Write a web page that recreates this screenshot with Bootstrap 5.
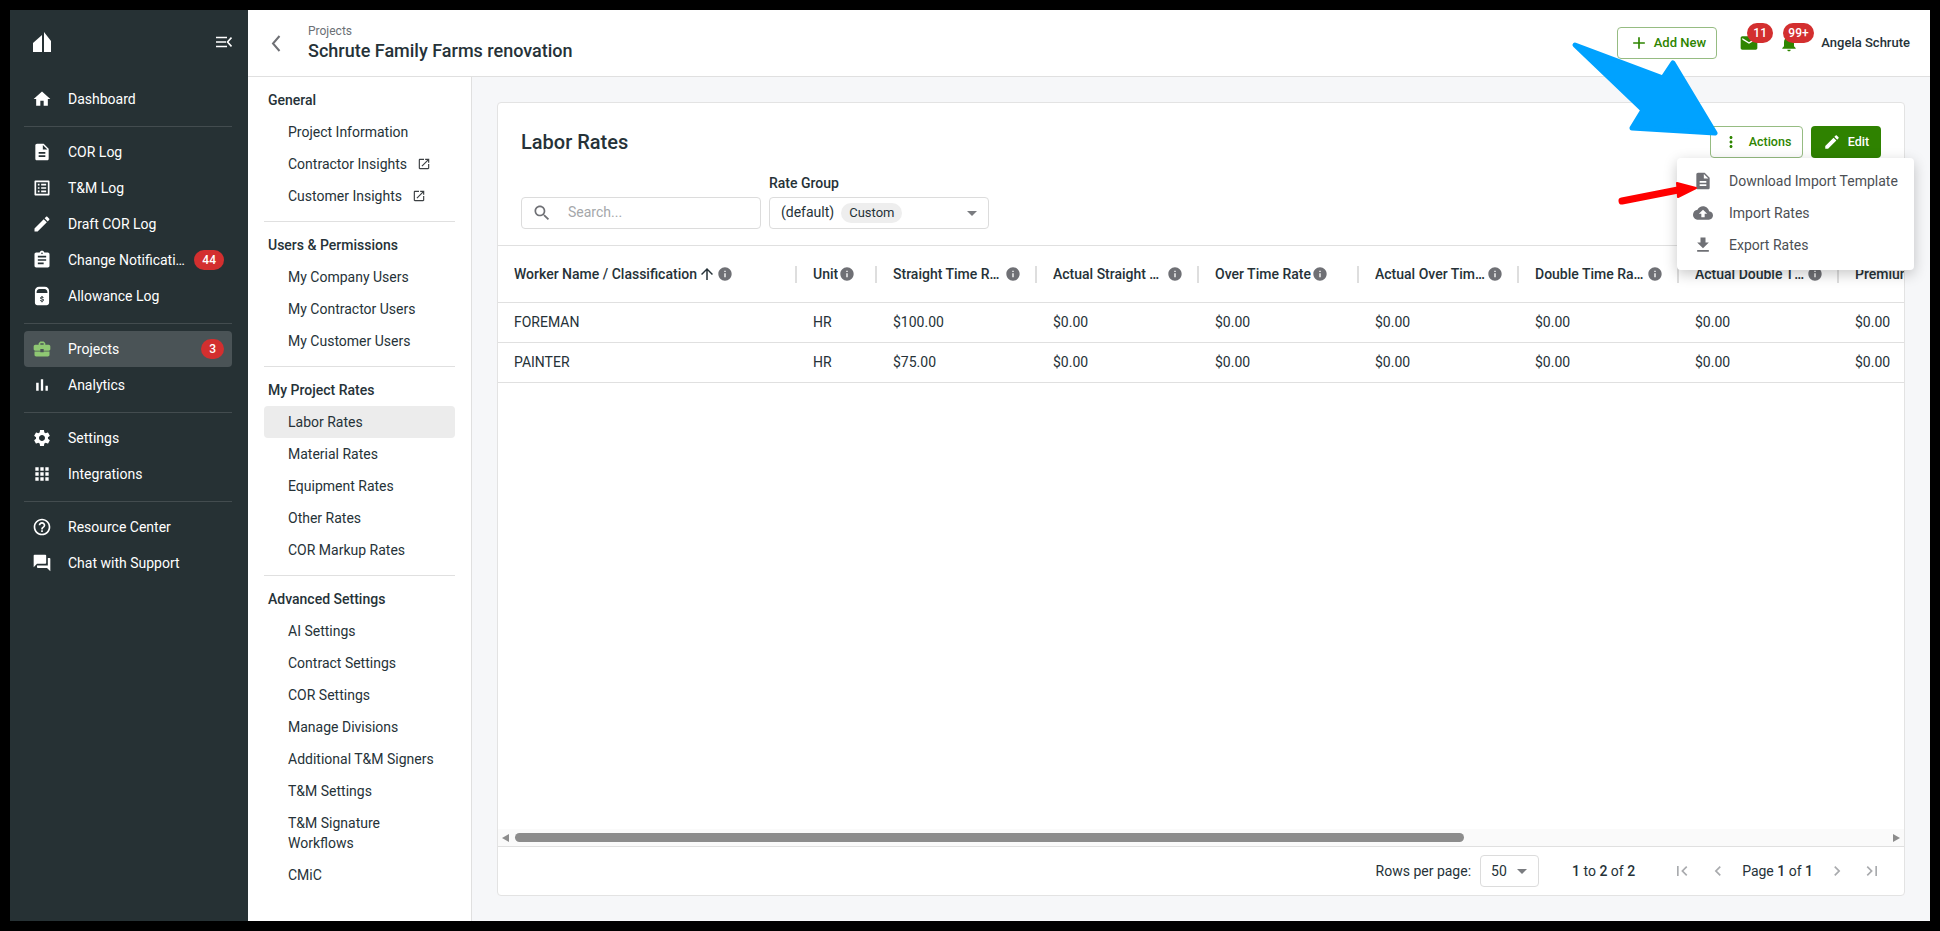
<!DOCTYPE html>
<html lang="en">
<head>
  <meta charset="UTF-8">
  <meta name="viewport" content="width=device-width, initial-scale=1.0">
  <title>Labor Rates - Schrute Family Farms renovation</title>
  <link rel="stylesheet" href="https://cdn.jsdelivr.net/npm/bootstrap@5.3.3/dist/css/bootstrap.min.css">
  <style>
    html, body { height: 100%; }
    body {
      background: #000;
      padding: 10px;
      overflow: hidden;
      font-family: Roboto, "Liberation Sans", sans-serif;
      font-size: 14px;
      color: #263238;
    }
    .ico { width: 20px; height: 20px; fill: currentColor; flex: none; display: block; }
    .ico-18 { width: 18px; height: 18px; }
    .ico-info { width: 16px; height: 16px; fill: #6f7075; margin-left: 1px; }
    .ico-sort { width: 18px; height: 18px; margin-left: 1px; }
    .min-w-zero { min-width: 0; }

    .app-shell { height: 911px; background: #fff; }

    /* left dark rail */
    .rail { width: 238px; flex: none; background: #263134; padding: 0 14px; color: #fff; }
    .rail-head { height: 66px; margin: 0 0 5px; padding: 0 0 2px 9px; width: 208px; }
    .rail-nav { width: 208px; }
    .rail-link {
      height: 36px; padding: 0 8px; border-radius: 4px; color: #fff;
      gap: 16px; line-height: 36px; white-space: nowrap;
    }
    .rail-link:hover, .rail-link:focus { color: #fff; }
    .rail-link.is-current { background: #4a5356; }
    .rail-link.is-current .ico { color: #8fc873; }
    .rail-sep { margin: 9px 0 7px; border: 0; border-top: 1px solid #434c4f; opacity: 1; }
    .count-pill {
      background: #d32f2f; color: #fff; font-size: 12px; font-weight: 500; height: 20px;
      line-height: 20px; padding: 0 8px; border-radius: 10px; border: 0;
    }
    .rail-label { overflow: hidden; text-overflow: ellipsis; flex: 0 1 auto; min-width: 0; }
    .pill-tight { flex: none; margin-left: -8px; }

    /* top bar */
    .topbar { height: 67px; flex: none; border-bottom: 1px solid #e0e0e0; padding: 0 20px 0 16px; }
    .crumb-top { font-size: 12px; color: #6b7075; line-height: 14px; }
    .crumb-title { font-size: 18px; font-weight: 500; line-height: 22px; margin-top: 2px; }
    .back-ico { width: 24px; height: 24px; fill: none; stroke: #6f7075; stroke-width: 2; }
    .btn-line {
      height: 32px; padding: 0; border: 1px solid #96bc82; border-radius: 4px; color: #2e8500;
      background: #fff; font-size: 13px; font-weight: 500;
    }
    .btn-line:hover { background: #fff; color: #2e8500; border-color: #96bc82; }
    .btn-add { width: 100px; gap: 5px; }
    .btn-actions { width: 93px; gap: 9px; font-size: 12.5px; }
    .btn-fill {
      width: 70px; height: 32px; padding: 0; border: 0; border-radius: 4px; color: #fff;
      background: #2f8200; font-size: 12.5px; font-weight: 500; gap: 7px;
    }
    .btn-fill:hover { background: #2f8200; color: #fff; }
    .alert-ico { color: #2e8500; width: 20px; height: 20px; position: relative; }
    .alert-mail { margin-left: 22px; }
    .alert-bell { margin-left: 20px; }
    .alert-num { position: absolute; top: -10px; left: 8px; height: 20px; padding: 0 6px; line-height: 20px; }
    .alert-num.wide { left: 4px; padding: 0 5px; }
    .user-name { font-size: 13px; font-weight: 500; white-space: nowrap; margin-left: 22px; }

    /* second column of links */
    .subnav { width: 224px; flex: none; border-right: 1px solid #e0e0e0; padding: 7px 16px 0; }
    .sub-head { font-weight: 500; line-height: 32px; height: 32px; padding-left: 4px; }
    .sub-link { padding: 6px 0 6px 24px; line-height: 20px; color: #263238; border-radius: 4px; }
    .sub-link:hover, .sub-link:focus { color: #263238; }
    .sub-link.is-current { background: #ececec; }
    .sub-link .ico { width: 14px; height: 14px; margin-left: 10px; color: #3c4043; }
    .sub-sep { margin: 9px 0 7px; border: 0; border-top: 1px solid #e0e0e0; opacity: 1; }

    /* content */
    .work-area { background: #f6f7f9; padding: 25px; min-width: 0; }
    .rate-card { border: 1px solid #e3e3e3; border-radius: 4px; background: #fff; height: 794px; min-width: 0; }
    .rate-head { padding: 23px 23px 16px 23px; }
    .rate-title { font-size: 20px; font-weight: 500; margin: 0; }
    .title-row { height: 32px; margin-bottom: 17px; }
    .field-label { font-weight: 500; line-height: 16px; margin-bottom: 6px; }
    .field-box {
      height: 32px; border: 1px solid #dcdcdc; border-radius: 4px; background: #fff;
    }
    .field-search { width: 240px; padding: 0 10px; gap: 16px; color: #6f7075; }
    .field-search input { border: 0; outline: 0; padding: 0 0 2px; font-size: 14px; width: 100%; min-width: 0; box-shadow: none; height: 28px; }
    .field-search input::placeholder { color: #a5a7aa; }
    .field-select { width: 220px; padding: 0 4px 0 11px; }
    .field-value { margin-bottom: 2px; }
    .chip-custom {
      background: #eeeeee; color: #263238; font-size: 13px; font-weight: 400;
      padding: 0 8px; height: 20px; line-height: 20px; border-radius: 10px; margin-left: 7px;
    }
    .caret-ico { color: #7a7c80; width: 24px; height: 24px; margin-left: auto; }

    .table-clip { overflow: hidden; min-height: 0; }
    .rates-table { table-layout: fixed; width: 1501px; margin: 0; border-top: 1px solid #e0e0e0; font-size: 14px; }
    .rates-table > thead > tr > th {
      height: 57px; padding: 0 16px; font-weight: 500; vertical-align: middle; position: relative;
      border-bottom: 1px solid #e0e0e0; color: #263238;
    }
    .rates-table > thead > tr > th::after {
      content: ""; position: absolute; right: 0; top: 20px; width: 2px; height: 17px; background: #dedede;
    }
    .rates-table > tbody > tr > td {
      height: 40px; padding: 0 16px; vertical-align: middle; border-bottom: 1px solid #e0e0e0; color: #263238;
    }
    .head-text { overflow: hidden; text-overflow: ellipsis; white-space: nowrap; min-width: 0; }
    .w-name { width: 299px; }
    .w-unit { width: 80px; }
    .w-rate { width: 160px; }
    .w-rate-wide { width: 162px; }

    .fake-scroll { height: 17px; flex: none; background: #fafafa; padding: 0 4px; }
    .scroll-arrow { width: 0; height: 0; border-top: 4.5px solid transparent; border-bottom: 4.5px solid transparent; flex: none; }
    .scroll-arrow.to-left { border-right: 7px solid #8c8c8c; }
    .scroll-arrow.to-right { border-left: 7px solid #8c8c8c; margin-left: auto; }
    .scroll-thumb { width: 949px; height: 9px; background: #8c8c8c; border-radius: 5px; margin-left: 6px; }

    .rate-foot { height: 49px; flex: none; border-top: 1px solid #e0e0e0; padding-right: 22px; white-space: nowrap; }
    .foot-select { width: 59px; margin-left: 9px; padding-left: 10px; }
    .foot-range { margin-left: 33px; }
    .pager-ico { color: #a9abae; }
    .pager-first { margin-right: 2px; }
    .pager-last { margin-left: 1px; }
    .foot-pager { margin-left: 37px; gap: 14px; }

    /* open actions menu */
    .actions-menu {
      display: block; position: absolute; top: 32px; left: -33px; width: 237px; padding: 7px 0 9px; margin: 0;
      border: 0; border-radius: 4px; box-shadow: 0 4px 14px rgba(0,0,0,.22); z-index: 5;
    }
    .actions-menu .dropdown-item {
      height: 32px; padding: 0 0 0 16px; gap: 16px; font-size: 14px; color: #4c4f54;
    }
    .actions-menu .ico { color: #6f7075; }

    .callouts { position: fixed; left: 0; top: 0; width: 1940px; height: 931px; pointer-events: none; z-index: 10; }
  </style>
</head>
<body>

<svg width="0" height="0" class="d-none">
  <symbol id="i-home" viewBox="0 0 24 24"><path d="M10 20v-6h4v6h5v-8h3L12 3 2 12h3v8z"/></symbol>
  <symbol id="i-doc" viewBox="0 0 24 24"><path d="M14 2H6c-1.1 0-1.99.9-1.99 2L4 20c0 1.1.89 2 1.99 2H18c1.1 0 2-.9 2-2V8l-6-6zm2 16H8v-2h8v2zm0-4H8v-2h8v2zm-3-5V3.5L18.5 9H13z"/></symbol>
  <symbol id="i-list" viewBox="0 0 24 24"><path d="M19 5v14H5V5h14m1.1-2H3.9c-.5 0-.9.4-.9.9v16.2c0 .4.4.9.9.9h16.2c.4 0 .9-.5.9-.9V3.9c0-.5-.5-.9-.9-.9zM11 7h6v2h-6V7zm0 4h6v2h-6v-2zm0 4h6v2h-6zM7 7h2v2H7zm0 4h2v2H7zm0 4h2v2H7z"/></symbol>
  <symbol id="i-edit" viewBox="0 0 24 24"><path d="M3 17.25V21h3.75L17.81 9.94l-3.75-3.75L3 17.25zM20.71 7.04c.39-.39.39-1.02 0-1.41l-2.34-2.34c-.39-.39-1.02-.39-1.41 0l-1.83 1.83 3.75 3.75 1.83-1.83z"/></symbol>
  <symbol id="i-clip" viewBox="0 0 24 24"><path d="M19 3h-4.18C14.4 1.84 13.3 1 12 1c-1.3 0-2.4.84-2.82 2H5c-1.1 0-2 .9-2 2v14c0 1.1.9 2 2 2h14c1.1 0 2-.9 2-2V5c0-1.1-.9-2-2-2zm-7 0c.55 0 1 .45 1 1s-.45 1-1 1-1-.45-1-1 .45-1 1-1zm2 14H7v-2h7v2zm3-4H7v-2h10v2zm0-4H7V7h10v2z"/></symbol>
  <symbol id="i-jar" viewBox="0 0 24 24"><path fill-rule="evenodd" d="M8.500 1h7c3 0 5 2 5 5v14c0 1.700-1.300 3-3 3h-11c-1.700 0-3-1.300-3-3V6c0-3 2-5 5-5zM5.500 7.500v1h13v-1c0-2-1.400-4-3.500-4H9c-2.100 0-3.500 2-3.500 4zM11.300 12v.9c-.9.2-1.500.8-1.500 1.600 0 1 .8 1.400 2.200 1.800.8.200 1 .4 1 .7s-.3.6-.9.6-.9-.3-1-.7H9.700c.1.900.7 1.400 1.600 1.600v.9h1.400v-.9c.9-.2 1.600-.8 1.600-1.600 0-1.100-.9-1.500-2.300-1.900-.8-.2-1-.4-1-.6s.3-.5.9-.5c.5 0 .8.300.9.600h1.300c-.1-.8-.6-1.300-1.400-1.500V12z"/></symbol>
  <symbol id="i-case" viewBox="0 0 24 24"><path d="M10 16v-1H3.010L3 19c0 1.110.89 2 2 2h14c1.110 0 2-.89 2-2v-4h-7v1h-4zm10-9h-4.010V5l-2-2h-4l-2 2v2H4c-1.100 0-2 .9-2 2v3c0 1.110.89 2 2 2h6v-2h4v2h6c1.100 0 2-.9 2-2V9c0-1.100-.9-2-2-2zm-6 0h-4V5h4v2z"/></symbol>
  <symbol id="i-bars" viewBox="0 0 24 24"><path d="M5 9.200h3V19H5zM10.600 5h2.800v14h-2.800zm5.600 8H19v6h-2.800z"/></symbol>
  <symbol id="i-gear" viewBox="0 0 24 24"><path d="M19.140 12.940c.04-.3.06-.61.06-.94 0-.32-.02-.64-.07-.94l2.030-1.580c.18-.14.23-.41.12-.61l-1.920-3.320c-.12-.22-.37-.29-.59-.22l-2.390.96c-.5-.38-1.030-.7-1.620-.94l-.36-2.540c-.04-.24-.24-.41-.48-.41h-3.840c-.24 0-.43.17-.47.41l-.36 2.540c-.59.24-1.130.57-1.620.94l-2.390-.96c-.22-.08-.47 0-.59.22L2.740 8.870c-.12.21-.08.47.12.61l2.030 1.580c-.05.3-.09.63-.09.94s.02.64.07.94l-2.030 1.580c-.18.14-.23.41-.12.61l1.920 3.320c.12.22.37.29.59.22l2.390-.96c.5.38 1.030.7 1.620.94l.36 2.540c.05.24.24.41.48.41h3.840c.24 0 .44-.17.47-.41l.36-2.540c.59-.24 1.130-.56 1.620-.94l2.390.96c.22.08.47 0 .59-.22l1.920-3.320c.12-.22.07-.47-.12-.61l-2.010-1.580zM12 15.600c-1.980 0-3.600-1.620-3.600-3.600s1.620-3.600 3.600-3.600 3.600 1.620 3.600 3.600-1.620 3.600-3.600 3.600z"/></symbol>
  <symbol id="i-apps" viewBox="0 0 24 24"><path d="M4 8h4V4H4v4zm6 12h4v-4h-4v4zm-6 0h4v-4H4v4zm0-6h4v-4H4v4zm6 0h4v-4h-4v4zm6-10v4h4V4h-4zm-6 4h4V4h-4v4zm6 6h4v-4h-4v4zm0 6h4v-4h-4v4z"/></symbol>
  <symbol id="i-help" viewBox="0 0 24 24"><path d="M11 18h2v-2h-2v2zm1-16C6.480 2 2 6.480 2 12s4.480 10 10 10 10-4.480 10-10S17.520 2 12 2zm0 18c-4.410 0-8-3.590-8-8s3.590-8 8-8 8 3.590 8 8-3.590 8-8 8zm0-14c-2.210 0-4 1.790-4 4h2c0-1.100.9-2 2-2s2 .9 2 2c0 2-3 1.750-3 5h2c0-2.250 3-2.500 3-5 0-2.210-1.790-4-4-4z"/></symbol>
  <symbol id="i-forum" viewBox="0 0 24 24"><path d="M21 6h-2v9H6v2c0 .55.45 1 1 1h11l4 4V7c0-.55-.45-1-1-1zm-4 6V3c0-.55-.45-1-1-1H3c-.55 0-1 .45-1 1v14l4-4h10c.55 0 1-.45 1-1z"/></symbol>
  <symbol id="i-open" viewBox="0 0 24 24"><path d="M19 19H5V5h7V3H5c-1.110 0-2 .9-2 2v14c0 1.100.89 2 2 2h14c1.100 0 2-.9 2-2v-7h-2v7zM14 3v2h3.590l-9.830 9.830 1.410 1.410L19 6.410V10h2V3h-7z"/></symbol>
  <symbol id="i-search" viewBox="0 0 24 24"><path d="M15.500 14h-.79l-.28-.27C15.410 12.590 16 11.110 16 9.500 16 5.910 13.090 3 9.500 3S3 5.910 3 9.500 5.910 16 9.500 16c1.610 0 3.090-.59 4.230-1.570l.27.28v.79l5 4.990L20.490 19l-4.990-5zm-6 0C7.010 14 5 11.990 5 9.500S7.010 5 9.500 5 14 7.010 14 9.500 11.990 14 9.500 14z"/></symbol>
  <symbol id="i-info" viewBox="0 0 24 24"><path d="M12 2C6.480 2 2 6.480 2 12s4.480 10 10 10 10-4.480 10-10S17.520 2 12 2zm1 15h-2v-6h2v6zm0-8h-2V7h2v2z"/></symbol>
  <symbol id="i-up" viewBox="0 0 24 24"><path d="M4 12l1.410 1.410L11 7.830V20h2V7.830l5.580 5.590L20 12l-8-8-8 8z"/></symbol>
  <symbol id="i-more" viewBox="0 0 24 24"><path d="M12 8c1.100 0 2-.9 2-2s-.9-2-2-2-2 .9-2 2 .9 2 2 2zm0 2c-1.100 0-2 .9-2 2s.9 2 2 2 2-.9 2-2-.9-2-2-2zm0 6c-1.100 0-2 .9-2 2s.9 2 2 2 2-.9 2-2-.9-2-2-2z"/></symbol>
  <symbol id="i-cloud" viewBox="0 0 24 24"><path d="M19.350 10.040C18.670 6.590 15.640 4 12 4 9.110 4 6.600 5.640 5.350 8.040 2.340 8.360 0 10.910 0 14c0 3.310 2.690 6 6 6h13c2.760 0 5-2.240 5-5 0-2.640-2.050-4.780-4.650-4.960zM14 13v4h-4v-4H7l5-5 5 5h-3z"/></symbol>
  <symbol id="i-down" viewBox="0 0 24 24"><path d="M19 9h-4V3H9v6H5l7 7 7-7zM5 18v2h14v-2H5z"/></symbol>
  <symbol id="i-mail" viewBox="0 0 24 24"><path d="M20 4H4c-1.100 0-1.990.9-1.990 2L2 18c0 1.100.9 2 2 2h16c1.100 0 2-.9 2-2V6c0-1.100-.9-2-2-2zm0 4l-8 5-8-5V6l8 5 8-5v2z"/></symbol>
  <symbol id="i-bell" viewBox="0 0 24 24"><path d="M12 22c1.100 0 2-.9 2-2h-4c0 1.100.89 2 2 2zm6-6v-5c0-3.070-1.640-5.640-4.500-6.320V4c0-.83-.67-1.500-1.500-1.500s-1.500.67-1.500 1.500v.68C7.630 5.360 6 7.920 6 11v5l-2 2v1h16v-1l-2-2z"/></symbol>
  <symbol id="i-first" viewBox="0 0 24 24"><path d="M18.410 16.590L13.820 12l4.590-4.590L17 6l-6 6 6 6zM6 6h2v12H6z"/></symbol>
  <symbol id="i-last" viewBox="0 0 24 24"><path d="M5.590 7.410L10.180 12l-4.590 4.590L7 18l6-6-6-6zM16 6h2v12h-2z"/></symbol>
  <symbol id="i-prev" viewBox="0 0 24 24"><path d="M15.410 7.410L14 6l-6 6 6 6 1.410-1.410L10.830 12z"/></symbol>
  <symbol id="i-next" viewBox="0 0 24 24"><path d="M10 6L8.590 7.410 13.170 12l-4.580 4.590L10 18l6-6z"/></symbol>
  <symbol id="i-plus" viewBox="0 0 24 24"><path d="M19 13h-6v6h-2v-6H5v-2h6V5h2v6h6v2z"/></symbol>
  <symbol id="i-caret" viewBox="0 0 24 24"><path d="M7 10l5 5 5-5z"/></symbol>
</svg>

<div class="app-shell d-flex">

  <aside class="rail d-flex flex-column">
    <div class="rail-head d-flex align-items-center justify-content-between">
      <svg width="18" height="20" viewBox="0 0 18 20" fill="#fff"><path d="M0 20v-9l9-8v17zM11 0l7 9v11h-7z"/></svg>
      <svg width="16" height="12" viewBox="0 0 16 12" fill="none" stroke="#fff" stroke-width="1.600"><path d="M0 1.500h11M0 6h10M0 10.500h11M15.500 1.500L11.500 6l4 4.500"/></svg>
    </div>
    <nav class="nav flex-column flex-nowrap rail-nav">
      <a class="nav-link rail-link d-flex align-items-center" href="#"><svg class="ico"><use href="#i-home"/></svg>Dashboard</a>
      <hr class="rail-sep">
      <a class="nav-link rail-link d-flex align-items-center" href="#"><svg class="ico"><use href="#i-doc"/></svg>COR Log</a>
      <a class="nav-link rail-link d-flex align-items-center" href="#"><svg class="ico"><use href="#i-list"/></svg>T&amp;M Log</a>
      <a class="nav-link rail-link d-flex align-items-center" href="#"><svg class="ico"><use href="#i-edit"/></svg>Draft COR Log</a>
      <a class="nav-link rail-link d-flex align-items-center" href="#"><svg class="ico"><use href="#i-clip"/></svg><span class="rail-label">Change Notifications</span><span class="count-pill pill-tight">44</span></a>
      <a class="nav-link rail-link d-flex align-items-center" href="#"><svg class="ico"><use href="#i-jar"/></svg>Allowance Log</a>
      <hr class="rail-sep">
      <a class="nav-link rail-link is-current d-flex align-items-center" href="#"><svg class="ico"><use href="#i-case"/></svg>Projects<span class="count-pill ms-auto">3</span></a>
      <a class="nav-link rail-link d-flex align-items-center" href="#"><svg class="ico"><use href="#i-bars"/></svg>Analytics</a>
      <hr class="rail-sep">
      <a class="nav-link rail-link d-flex align-items-center" href="#"><svg class="ico"><use href="#i-gear"/></svg>Settings</a>
      <a class="nav-link rail-link d-flex align-items-center" href="#"><svg class="ico"><use href="#i-apps"/></svg>Integrations</a>
      <hr class="rail-sep">
      <a class="nav-link rail-link d-flex align-items-center" href="#"><svg class="ico"><use href="#i-help"/></svg>Resource Center</a>
      <a class="nav-link rail-link d-flex align-items-center" href="#"><svg class="ico"><use href="#i-forum"/></svg>Chat with Support</a>
    </nav>
  </aside>

  <div class="flex-grow-1 d-flex flex-column min-w-zero">
    <header class="topbar d-flex align-items-center">
      <svg class="ico back-ico" viewBox="0 0 24 24"><path d="M15.500 5L9 12.500l6.500 7.500"/></svg>
      <div class="ms-3 ps-1">
        <div class="crumb-top">Projects</div>
        <div class="crumb-title">Schrute Family Farms renovation</div>
      </div>
      <div class="ms-auto d-flex align-items-center">
        <button type="button" class="btn btn-line btn-add d-flex align-items-center justify-content-center"><svg class="ico"><use href="#i-plus"/></svg>Add New</button>
        <span class="alert-ico alert-mail d-block"><svg class="ico"><use href="#i-mail"/></svg><span class="count-pill alert-num">11</span></span>
        <span class="alert-ico alert-bell d-block"><svg class="ico"><use href="#i-bell"/></svg><span class="count-pill alert-num wide">99+</span></span>
        <span class="user-name">Angela Schrute</span>
      </div>
    </header>

    <div class="flex-grow-1 d-flex overflow-hidden">
      <nav class="subnav nav flex-column flex-nowrap">
        <div class="sub-head">General</div>
        <a class="nav-link sub-link" href="#">Project Information</a>
        <a class="nav-link sub-link d-flex align-items-center" href="#">Contractor Insights<svg class="ico"><use href="#i-open"/></svg></a>
        <a class="nav-link sub-link d-flex align-items-center" href="#">Customer Insights<svg class="ico"><use href="#i-open"/></svg></a>
        <hr class="sub-sep">
        <div class="sub-head">Users &amp; Permissions</div>
        <a class="nav-link sub-link" href="#">My Company Users</a>
        <a class="nav-link sub-link" href="#">My Contractor Users</a>
        <a class="nav-link sub-link" href="#">My Customer Users</a>
        <hr class="sub-sep">
        <div class="sub-head">My Project Rates</div>
        <a class="nav-link sub-link is-current" href="#">Labor Rates</a>
        <a class="nav-link sub-link" href="#">Material Rates</a>
        <a class="nav-link sub-link" href="#">Equipment Rates</a>
        <a class="nav-link sub-link" href="#">Other Rates</a>
        <a class="nav-link sub-link" href="#">COR Markup Rates</a>
        <hr class="sub-sep">
        <div class="sub-head">Advanced Settings</div>
        <a class="nav-link sub-link" href="#">AI Settings</a>
        <a class="nav-link sub-link" href="#">Contract Settings</a>
        <a class="nav-link sub-link" href="#">COR Settings</a>
        <a class="nav-link sub-link" href="#">Manage Divisions</a>
        <a class="nav-link sub-link" href="#">Additional T&amp;M Signers</a>
        <a class="nav-link sub-link" href="#">T&amp;M Settings</a>
        <a class="nav-link sub-link" href="#">T&amp;M Signature<br>Workflows</a>
        <a class="nav-link sub-link" href="#">CMiC</a>
      </nav>

      <main class="work-area flex-grow-1">
        <section class="rate-card d-flex flex-column">
          <div class="rate-head">
            <div class="title-row d-flex align-items-center">
              <h2 class="rate-title">Labor Rates</h2>
              <div class="ms-auto d-flex gap-2">
                <div class="dropdown">
                  <button type="button" class="btn btn-line btn-actions d-flex align-items-center justify-content-center"><svg class="ico ico-18"><use href="#i-more"/></svg>Actions</button>
                  <div class="dropdown-menu actions-menu">
                    <a class="dropdown-item d-flex align-items-center" href="#"><svg class="ico"><use href="#i-doc"/></svg>Download Import Template</a>
                    <a class="dropdown-item d-flex align-items-center" href="#"><svg class="ico"><use href="#i-cloud"/></svg>Import Rates</a>
                    <a class="dropdown-item d-flex align-items-center" href="#"><svg class="ico"><use href="#i-down"/></svg>Export Rates</a>
                  </div>
                </div>
                <button type="button" class="btn btn-fill d-flex align-items-center justify-content-center"><svg class="ico ico-18"><use href="#i-edit"/></svg>Edit</button>
              </div>
            </div>
            <div class="d-flex align-items-end gap-2">
              <div class="field-box field-search d-flex align-items-center">
                <svg class="ico"><use href="#i-search"/></svg>
                <input type="text" class="form-control" placeholder="Search...">
              </div>
              <div>
                <div class="field-label">Rate Group</div>
                <div class="field-box field-select d-flex align-items-center">
                  <span class="field-value">(default)</span><span class="badge chip-custom">Custom</span>
                  <svg class="ico caret-ico"><use href="#i-caret"/></svg>
                </div>
              </div>
            </div>
          </div>

          <div class="table-clip flex-grow-1">
            <table class="table rates-table">
              <thead>
                <tr>
                  <th class="w-name"><div class="d-flex align-items-center"><span class="head-text">Worker Name / Classification</span><svg class="ico ico-sort"><use href="#i-up"/></svg><svg class="ico ico-info"><use href="#i-info"/></svg></div></th>
                  <th class="w-unit"><div class="d-flex align-items-center"><span class="head-text">Unit</span><svg class="ico ico-info"><use href="#i-info"/></svg></div></th>
                  <th class="w-rate"><div class="d-flex align-items-center"><span class="head-text">Straight Time Rate</span><svg class="ico ico-info"><use href="#i-info"/></svg></div></th>
                  <th class="w-rate-wide"><div class="d-flex align-items-center"><span class="head-text">Actual Straight Time</span><svg class="ico ico-info"><use href="#i-info"/></svg></div></th>
                  <th class="w-rate"><div class="d-flex align-items-center"><span class="head-text">Over Time Rate</span><svg class="ico ico-info"><use href="#i-info"/></svg></div></th>
                  <th class="w-rate"><div class="d-flex align-items-center"><span class="head-text">Actual Over Time Rate</span><svg class="ico ico-info"><use href="#i-info"/></svg></div></th>
                  <th class="w-rate"><div class="d-flex align-items-center"><span class="head-text">Double Time Rates</span><svg class="ico ico-info"><use href="#i-info"/></svg></div></th>
                  <th class="w-rate"><div class="d-flex align-items-center"><span class="head-text">Actual Double Time</span><svg class="ico ico-info"><use href="#i-info"/></svg></div></th>
                  <th class="w-rate"><div class="d-flex align-items-center"><span class="head-text">Premium Rate</span><svg class="ico ico-info"><use href="#i-info"/></svg></div></th>
                </tr>
              </thead>
              <tbody>
                <tr><td>FOREMAN</td><td>HR</td><td>$100.00</td><td>$0.00</td><td>$0.00</td><td>$0.00</td><td>$0.00</td><td>$0.00</td><td>$0.00</td></tr>
                <tr><td>PAINTER</td><td>HR</td><td>$75.00</td><td>$0.00</td><td>$0.00</td><td>$0.00</td><td>$0.00</td><td>$0.00</td><td>$0.00</td></tr>
              </tbody>
            </table>
          </div>

          <div class="fake-scroll d-flex align-items-center">
            <span class="scroll-arrow to-left"></span>
            <span class="scroll-thumb"></span>
            <span class="scroll-arrow to-right"></span>
          </div>

          <div class="rate-foot d-flex align-items-center justify-content-end">
            <span>Rows per page:</span>
            <div class="field-box field-select foot-select d-flex align-items-center"><span>50</span><svg class="ico caret-ico"><use href="#i-caret"/></svg></div>
            <span class="foot-range"><b class="fw-medium">1</b> to <b class="fw-medium">2</b> of <b class="fw-medium">2</b></span>
            <div class="foot-pager d-flex align-items-center">
              <svg class="ico pager-ico pager-first"><use href="#i-first"/></svg>
              <svg class="ico pager-ico"><use href="#i-prev"/></svg>
              <span>Page <b class="fw-medium">1</b> of <b class="fw-medium">1</b></span>
              <svg class="ico pager-ico"><use href="#i-next"/></svg>
              <svg class="ico pager-ico pager-last"><use href="#i-last"/></svg>
            </div>
          </div>
        </section>
      </main>
    </div>
  </div>
</div>

<!-- screenshot annotations drawn on top of the page -->
<svg class="callouts" viewBox="0 0 1940 931">
  <path d="M1575 45L1663 78L1673 63L1715 133L1632 128L1643 110Z" fill="#00a2ff" stroke="#00a2ff" stroke-width="5" stroke-linejoin="round"/>
  <path d="M1622 201L1678 190" stroke="#ff0000" stroke-width="7" stroke-linecap="round" fill="none"/>
  <path d="M1677 183L1696 188L1678 197Z" fill="#ff0000" stroke="#ff0000" stroke-width="2" stroke-linejoin="round"/>
</svg>

<script src="https://cdn.jsdelivr.net/npm/bootstrap@5.3.3/dist/js/bootstrap.bundle.min.js"></script>
</body>
</html>
